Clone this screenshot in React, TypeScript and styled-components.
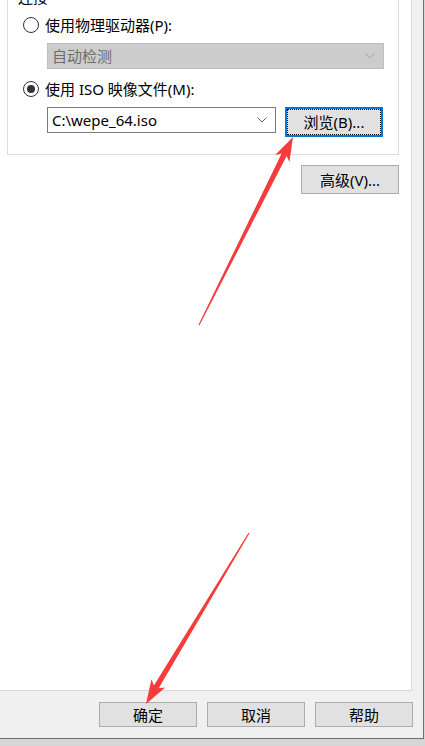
import * as React from "react";
import styled, { createGlobalStyle } from "styled-components";

const GlobalStyle = createGlobalStyle`
  html, body {
    margin: 0;
    padding: 0;
    background: #d6d6d6;
  }
  body {
    font-family: "Noto Sans", "Noto Sans CJK SC", sans-serif;
    font-size: 15px;
    color: #000;
  }
`;

const Page = styled.div`
  position: relative;
  width: 425px;
  height: 746px;
  overflow: hidden;
`;

const Dialog = styled.div`
  margin-top: -16px;
  width: 423px;
  background: #f0f0f0;
  border-right: 1px solid #6f6f6f;
  border-bottom: 1px solid #6f6f6f;
  display: flex;
  flex-direction: column;
`;

const TabPage = styled.div`
  width: 412px;
  height: 705px;
  box-sizing: content-box;
  background: #fff;
  border-right: 1px solid #d9d9d9;
  border-bottom: 1px solid #d9d9d9;
  padding-top: 13px;
  box-sizing: border-box;
  height: 707px;
`;

const GroupBox = styled.div`
  position: relative;
  margin-left: 7px;
  width: 392px;
  height: 158px;
  box-sizing: border-box;
  border: 1px solid #dcdcdc;
  padding: 17px 0 0 15px;
`;

const GroupLabel = styled.span`
  position: absolute;
  left: 8px;
  top: -8px;
  padding: 0 2px;
  background: #fff;
  line-height: 15px;
  font-size: 15px;
`;

const RadioRow = styled.label`
  display: flex;
  align-items: center;
  height: 20px;
  gap: 6px;
  line-height: 20px;
  white-space: nowrap;
`;

const RadioCircle = styled.span<{ $checked?: boolean }>`
  width: 16px;
  height: 16px;
  box-sizing: border-box;
  border-radius: 50%;
  border: 1px solid #333;
  background: #fff;
  display: flex;
  align-items: center;
  justify-content: center;
  &::after {
    content: "";
    width: 8px;
    height: 8px;
    border-radius: 50%;
    background: #333;
    display: ${(p) => (p.$checked ? "block" : "none")};
  }
`;

const ComboBox = styled.div<{ $disabled?: boolean; $width: number }>`
  width: ${(p) => p.$width}px;
  height: 26px;
  box-sizing: border-box;
  border: 1px solid ${(p) => (p.$disabled ? "#bfbfbf" : "#7a7a7a")};
  background: ${(p) => (p.$disabled ? "#cccccc" : "#fff")};
  color: ${(p) => (p.$disabled ? "#6d6d6d" : "#000")};
  display: flex;
  align-items: center;
  justify-content: space-between;
  padding: 0 8px 0 4px;
  line-height: 24px;
  white-space: nowrap;
`;

const IndentRow = styled.div<{ $top: number }>`
  display: flex;
  align-items: flex-start;
  gap: 9px;
  margin: ${(p) => p.$top}px 0 0 24px;
`;

const Button = styled.button<{ $focused?: boolean; $height?: number }>`
  width: 98px;
  height: ${(p) => p.$height ?? 25}px;
  box-sizing: border-box;
  margin: 0;
  padding: 0;
  background: #e1e1e1;
  border: ${(p) => (p.$focused ? "2px solid #0078d7" : "1px solid #adadad")};
  outline: ${(p) => (p.$focused ? "1px dotted #000" : "none")};
  outline-offset: -3px;
  font-family: "Noto Sans", "Noto Sans CJK SC", sans-serif;
  font-size: 15px;
  color: #000;
  line-height: 20px;
`;

const AdvancedRow = styled.div`
  display: flex;
  justify-content: flex-end;
  width: 399px;
  margin-top: 10px;
`;

const ButtonBar = styled.div`
  height: 47px;
  box-sizing: border-box;
  display: flex;
  justify-content: flex-end;
  gap: 10px;
  padding: 11px 10px 0 0;
`;

const Overlay = styled.svg`
  position: absolute;
  left: 0;
  top: 0;
  pointer-events: none;
`;

const Chevron = ({ color }: { color: string }) => (
  <svg width="10" height="6" viewBox="0 0 10 6">
    <path d="M0.5 0.5 L5 5 L9.5 0.5" fill="none" stroke={color} strokeWidth="1" />
  </svg>
);

function arrowPoints(tx: number, ty: number, px: number, py: number) {
  const dx = px - tx;
  const dy = py - ty;
  const len = Math.hypot(dx, dy);
  const ux = dx / len;
  const uy = dy / len;
  const nx = -uy;
  const ny = ux;
  const at = (d: number, w: number) =>
    `${(px - ux * d + nx * w).toFixed(1)},${(py - uy * d + ny * w).toFixed(1)}`;
  return [
    at(len, 0.6),
    at(20, 2.8),
    at(24, 8),
    at(0, 0),
    at(24, -8),
    at(20, -2.8),
    at(len, -0.6),
  ].join(" ");
}

const arrows = [
  { tail: [199, 325], tip: [293, 137] },
  { tail: [249, 533], tip: [146, 704] },
];

export default function App() {
  return (
    <Page>
      <GlobalStyle />
      <Dialog>
        <TabPage>
          <GroupBox>
            <GroupLabel>连接</GroupLabel>
            <RadioRow>
              <RadioCircle />
              使用物理驱动器(P):
            </RadioRow>
            <IndentRow $top={8}>
              <ComboBox $disabled $width={337}>
                自动检测
                <Chevron color="#a6a6a6" />
              </ComboBox>
            </IndentRow>
            <IndentRow $top={10}>
              <RadioRow style={{ marginLeft: -24 }}>
                <RadioCircle $checked />
                使用 ISO 映像文件(M):
              </RadioRow>
            </IndentRow>
            <IndentRow $top={8}>
              <ComboBox $width={229}>
                C:\wepe_64.iso
                <Chevron color="#606060" />
              </ComboBox>
              <Button $focused $height={30}>
                浏览(B)...
              </Button>
            </IndentRow>
          </GroupBox>
          <AdvancedRow>
            <Button $height={29}>高级(V)...</Button>
          </AdvancedRow>
        </TabPage>
        <ButtonBar>
          <Button>确定</Button>
          <Button>取消</Button>
          <Button>帮助</Button>
        </ButtonBar>
      </Dialog>
      <Overlay width={425} height={746}>
        {arrows.map((a, i) => (
          <polygon
            key={i}
            points={arrowPoints(a.tail[0], a.tail[1], a.tip[0], a.tip[1])}
            fill="#f53b3b"
          />
        ))}
      </Overlay>
    </Page>
  );
}
